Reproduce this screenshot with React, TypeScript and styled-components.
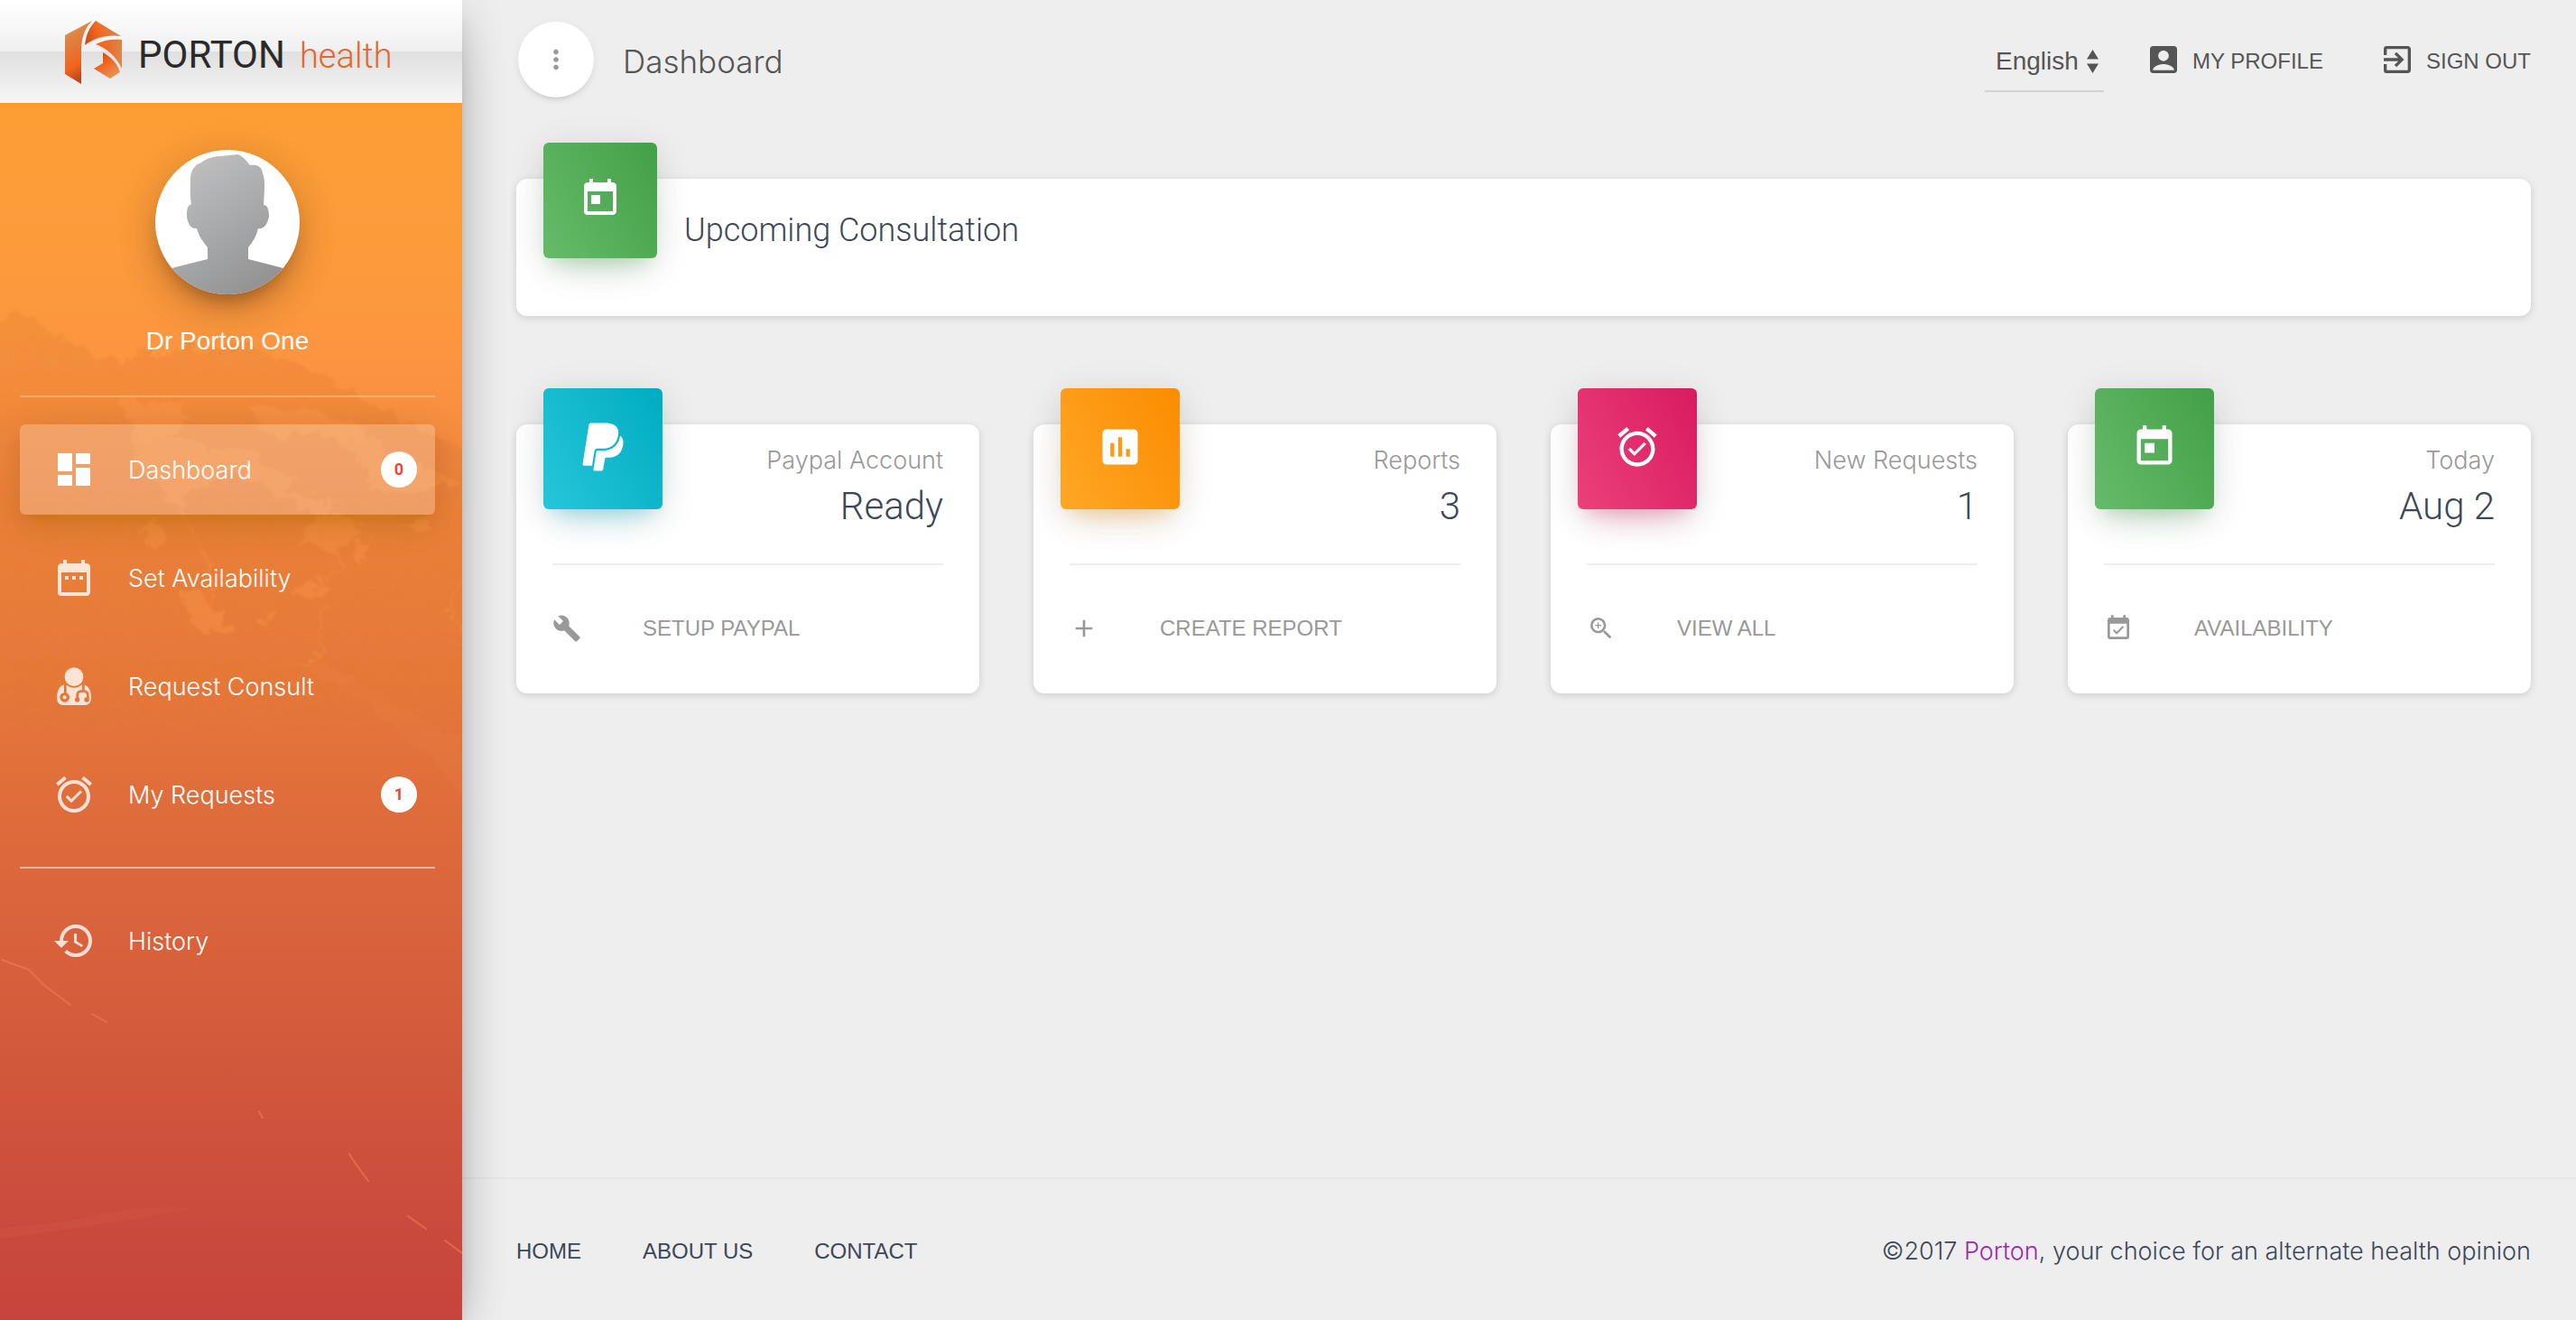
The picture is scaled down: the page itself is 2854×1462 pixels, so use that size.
import React from "react";
import styled, { createGlobalStyle, css } from "styled-components";
import {
  MdAccountBox,
  MdAdd,
  MdAlarmOn,
  MdAssessment,
  MdBuild,
  MdDashboard,
  MdDateRange,
  MdEventAvailable,
  MdExitToApp,
  MdHistory,
  MdMoreVert,
  MdToday,
  MdZoomIn,
} from "react-icons/md";
import { FaPaypal } from "react-icons/fa";

const sans = `"Liberation Sans", Arial, sans-serif`;
const light = `Inter, "Liberation Sans", sans-serif`;
const display = `Roboto, "Liberation Sans", sans-serif`;

const GlobalStyle = createGlobalStyle`
  *, *::before, *::after { box-sizing: border-box; }
  body {
    margin: 0;
    background: #eeeeee;
    color: #3c4858;
    font-family: ${sans};
    font-size: 24px;
    -webkit-font-smoothing: antialiased;
  }
  a { color: inherit; text-decoration: none; }
  h1, h2, p, ul { margin: 0; padding: 0; }
  ul { list-style: none; }
`;

const lightText = css`
  font-family: ${light};
  font-weight: 300;
  font-size: 27px;
`;

const Shell = styled.div`
  display: flex;
  min-height: 100vh;
`;

/* ---------- sidebar ---------- */

const Sidebar = styled.aside`
  flex: 0 0 512px;
  position: relative;
  z-index: 1;
  display: flex;
  flex-direction: column;
  box-shadow: 0 20px 60px -24px rgba(0, 0, 0, 0.42), 0 8px 50px 0 rgba(0, 0, 0, 0.12),
    0 16px 20px -10px rgba(0, 0, 0, 0.2);
`;

const Brand = styled.a`
  display: flex;
  align-items: center;
  gap: 18px;
  height: 114px;
  padding: 4px 0 0 72px;
  background: linear-gradient(#ffffff 0%, #f0f0f0 50%, #e0e0e0 50%, #f6f6f6 100%);
`;

const BrandMark = styled.svg`
  width: 63px;
  height: 70px;
  margin-bottom: 2px;
`;

const BrandName = styled.span`
  display: flex;
  align-items: baseline;
  gap: 16px;
  padding-top: 4px;
  font-family: ${display};
  font-size: 42px;
  line-height: 56px;
  color: #2b2a2a;
`;

const BrandSuffix = styled.span`
  font-weight: 300;
  font-size: 38px;
  color: #e4672b;
`;

const SidebarBody = styled.div`
  position: relative;
  flex: 1;
  padding: 52px 30px 0 22px;
  background: linear-gradient(
    #fc9e34 0%,
    #fd9b3b 12%,
    #fb9441 22%,
    #ee843c 34%,
    #e5783b 48%,
    #df6c3b 58%,
    #d8613c 70%,
    #d0553c 82%,
    #ca493d 93%,
    #c7443c 100%
  );
`;

const Scenery = styled.svg`
  position: absolute;
  inset: 0;
  width: 100%;
  height: 100%;
`;

const Profile = styled.div`
  position: relative;
  display: flex;
  flex-direction: column;
  align-items: center;
  gap: 32px;
  color: #ffffff;
`;

const Avatar = styled.svg`
  width: 160px;
  height: 160px;
  border-radius: 50%;
  background: #ffffff;
  box-shadow: 0 20px 60px -24px rgba(0, 0, 0, 0.42), 0 8px 50px 0 rgba(0, 0, 0, 0.12),
    0 16px 20px -10px rgba(0, 0, 0, 0.2);
`;

const ProfileName = styled.p`
  font-size: 28px;
  line-height: 40px;
`;

const Separator = styled.hr<{ $strong?: boolean }>`
  position: relative;
  height: 2px;
  margin: ${(p) => (p.$strong ? "30px 0" : "40px 0 30px")};
  border: 0;
  background: rgba(255, 255, 255, ${(p) => (p.$strong ? 0.5 : 0.3)});
`;

const NavList = styled.ul`
  position: relative;
  display: flex;
  flex-direction: column;
  gap: 20px;
`;

const NavLink = styled.a<{ $active?: boolean }>`
  display: flex;
  align-items: center;
  gap: 36px;
  height: 100px;
  padding: 0 20px 0 36px;
  border-radius: 6px;
  color: #ffffff;
  ${lightText}

  svg {
    width: 48px;
    height: 48px;
    opacity: ${(p) => (p.$active ? 1 : 0.8)};
  }

  ${(p) =>
    p.$active &&
    css`
      background: rgba(255, 255, 255, 0.23);
      box-shadow: 0 24px 40px -20px rgba(255, 152, 0, 0.28), 0 8px 40px 0 rgba(0, 0, 0, 0.12),
        0 14px 16px -10px rgba(190, 110, 0, 0.5);
    `}
`;

const Badge = styled.span`
  display: flex;
  align-items: center;
  justify-content: center;
  width: 40px;
  height: 40px;
  margin-left: auto;
  border-radius: 50%;
  background: #ffffff;
  color: #f44336;
  font: 700 18px/40px ${display};
`;

/* ---------- main ---------- */

const Main = styled.div`
  flex: 1;
  min-width: 0;
  display: flex;
  flex-direction: column;
`;

const Header = styled.header`
  display: flex;
  align-items: center;
  gap: 32px;
  padding: 24px 50px 0 62px;
  color: #555555;
`;

const MenuButton = styled.button`
  display: flex;
  align-items: center;
  justify-content: center;
  width: 84px;
  height: 84px;
  padding: 0;
  border: 0;
  border-radius: 50%;
  background: #ffffff;
  color: #999999;
  box-shadow: 0 4px 4px 0 rgba(153, 153, 153, 0.14), 0 6px 2px -4px rgba(153, 153, 153, 0.2),
    0 2px 10px 0 rgba(153, 153, 153, 0.12);

  svg {
    width: 34px;
    height: 34px;
  }
`;

const PageTitle = styled.h1`
  padding-top: 4px;
  font-family: ${light};
  font-weight: 300;
  font-size: 35px;
  line-height: 44px;
`;

const HeaderTools = styled.nav`
  display: flex;
  align-items: center;
  gap: 62px;
  margin-left: auto;
`;

const LanguageField = styled.label`
  position: relative;
  display: block;
  margin-right: -16px;

  svg {
    position: absolute;
    right: 6px;
    top: 25px;
    width: 13px;
    height: 26px;
    pointer-events: none;
  }
`;

const LanguageSelect = styled.select`
  appearance: none;
  display: block;
  width: 132px;
  height: 72px;
  padding: 6px 28px 0 12px;
  border: 0;
  border-bottom: 2px solid #d2d2d2;
  border-radius: 0;
  background: transparent;
  color: #555555;
  font: 400 28px/40px ${sans};
`;

const ToolLink = styled.a`
  display: flex;
  align-items: center;
  gap: 12px;
  line-height: 28px;

  svg {
    width: 40px;
    height: 40px;
  }

  span {
    padding-top: 4px;
  }
`;

const Content = styled.main`
  flex: 1;
  display: flex;
  flex-direction: column;
  gap: 120px;
  padding: 90px 50px 60px 60px;
`;

const cardSurface = css`
  border-radius: 12px;
  background: #ffffff;
  box-shadow: 0 2px 8px 0 rgba(0, 0, 0, 0.14);
`;

const tones = {
  green: ["#66bb6a", "#43a047", "76, 175, 80"],
  blue: ["#26c6da", "#00acc1", "0, 188, 212"],
  orange: ["#ffa726", "#fb8c00", "255, 152, 0"],
  rose: ["#ec407a", "#d81b60", "233, 30, 99"],
};
type Tone = keyof typeof tones;

const Tile = styled.div<{ $tone: Tone; $small?: boolean; $iconSize: number }>`
  display: flex;
  align-items: center;
  justify-content: center;
  flex: none;
  width: ${(p) => (p.$small ? 126 : 132)}px;
  height: ${(p) => (p.$small ? 128 : 134)}px;
  margin-top: -40px;
  padding-bottom: 4px;
  border-radius: 6px;
  color: #ffffff;
  background: linear-gradient(60deg, ${(p) => tones[p.$tone][0]}, ${(p) => tones[p.$tone][1]});
  box-shadow: 0 24px 40px -20px rgba(${(p) => tones[p.$tone][2]}, 0.28),
    0 8px 40px 0 rgba(0, 0, 0, 0.12), 0 14px 16px -10px rgba(${(p) => tones[p.$tone][2]}, 0.2);

  svg {
    width: ${(p) => p.$iconSize}px;
    height: ${(p) => p.$iconSize}px;
  }
`;

const Banner = styled.section`
  ${cardSurface}
  display: flex;
  gap: 30px;
  height: 152px;
  padding: 0 30px;
`;

const BannerTitle = styled.h2`
  padding-top: 36px;
  font-family: ${display};
  font-weight: 300;
  font-size: 36px;
  line-height: 42px;
`;

const CardGrid = styled.div`
  display: grid;
  grid-template-columns: repeat(4, minmax(0, 1fr));
  gap: 60px;
`;

const Card = styled.section`
  ${cardSurface}
`;

const CardTop = styled.div`
  display: flex;
  justify-content: space-between;
  padding: 0 40px 32px 30px;
`;

const Figures = styled.div`
  padding-top: 20px;
  text-align: right;
`;

const FigureLabel = styled.p`
  ${lightText}
  line-height: 40px;
  color: #999999;
`;

const FigureValue = styled.p`
  font-family: ${display};
  font-weight: 300;
  font-size: 42px;
  line-height: 62px;
`;

const CardAction = styled.a`
  display: flex;
  align-items: center;
  gap: 68px;
  margin: 0 40px;
  padding: 54px 0 56px;
  border-top: 2px solid #eeeeee;
  color: #999999;
  line-height: 32px;

  svg {
    width: 32px;
    height: 32px;
  }
`;

const Footer = styled.footer`
  display: flex;
  justify-content: space-between;
  padding: 60px 50px 56px 60px;
  border-top: 2px solid #e7e7e7;
  line-height: 40px;
`;

const FooterLinks = styled.ul`
  display: flex;
  gap: 68px;
`;

const Copyright = styled.p`
  ${lightText}

  a {
    color: #9c27b0;
  }
`;

/* ---------- drawings ---------- */

const LogoMark = () => (
  <BrandMark viewBox="0 0 63 70" aria-hidden="true">
    <defs>
      <linearGradient id="lg-a" x1="0" y1="0" x2="0.3" y2="1">
        <stop offset="0" stopColor="#dfa878" />
        <stop offset="0.3" stopColor="#dd8443" />
        <stop offset="0.75" stopColor="#f1641f" />
        <stop offset="1" stopColor="#b8481a" />
      </linearGradient>
      <linearGradient id="lg-b" x1="0" y1="0.6" x2="1" y2="0.4">
        <stop offset="0" stopColor="#c94f17" />
        <stop offset="0.35" stopColor="#f2661f" />
        <stop offset="1" stopColor="#d98a50" />
      </linearGradient>
      <linearGradient id="lg-c" x1="0" y1="0" x2="1" y2="0.1">
        <stop offset="0" stopColor="#f4651c" />
        <stop offset="0.5" stopColor="#ee6a27" />
        <stop offset="1" stopColor="#d9874a" />
      </linearGradient>
      <linearGradient id="lg-d" x1="0.2" y1="0" x2="0.9" y2="1">
        <stop offset="0" stopColor="#c94a12" />
        <stop offset="0.4" stopColor="#f1661f" />
        <stop offset="1" stopColor="#dfa067" />
      </linearGradient>
    </defs>
    <path d="M0 16 30 0C22 8 18 19 18 32V70L0 59Z" fill="url(#lg-a)" />
    <path d="M34 0 62 17C48 15 34 18 22 27 23 16 27 7 34 0Z" fill="url(#lg-b)" />
    <path d="M34 26C43 21 53 20 63 21V53C57 40 47 31 34 26Z" fill="url(#lg-c)" />
    <path d="M42 35C51 40 58 47 61 57L50 64 32 53 42 47Z" fill="url(#lg-d)" />
  </BrandMark>
);

const Silhouette = () => (
  <Avatar viewBox="0 0 160 160" role="img" aria-label="Dr Porton One">
    <defs>
      <linearGradient id="skin" x1="0.1" y1="0" x2="0.8" y2="1">
        <stop offset="0" stopColor="#c4c4c4" />
        <stop offset="0.5" stopColor="#a9aaac" />
        <stop offset="1" stopColor="#8f8f8f" />
      </linearGradient>
    </defs>
    <path
      fill="url(#skin)"
      d="M40 60C38 50 39 40 39 30 40 21 45 16 51 14 58 9 65 7 72 7L92 5C98 8 101 12 105 17 111 16 118 17 119 26 122 32 121 45 120 61 125 61 126 68 126 74 124 83 120 88 114 87 112 96 108 102 103 108V121L142 131 160 160H0L18 131 58 121V108C52 101 48 95 46 87 39 88 36 81 35 74 35 67 35 62 40 60Z"
    />
  </Avatar>
);

const DoctorIcon = () => (
  <svg viewBox="174 20 144 144" fill="currentColor" aria-hidden="true">
    <mask id="stethoscope">
      <rect x="174" y="20" width="144" height="144" fill="#fff" />
      <circle cx="246" cy="61" r="36" fill="#000" />
      <g stroke="#000" fill="none" strokeWidth="8" strokeLinecap="round">
        <path d="M217 84v32" />
        <path d="M277 84v24M257 136v-14q0-14 16-14h4q15 0 15 16v12" />
      </g>
      <circle cx="215" cy="129" r="16" fill="#000" />
      <circle cx="215" cy="129" r="6" fill="#fff" />
      <circle cx="257" cy="137" r="8" fill="#000" />
      <circle cx="288" cy="137" r="8" fill="#000" />
    </mask>
    <circle cx="246" cy="61" r="31" />
    <path
      mask="url(#stethoscope)"
      d="M214 87h64c18 5 25 22 25 45 0 15-9 23-22 23h-70c-13 0-22-8-22-23 0-23 7-40 25-45z"
    />
  </svg>
);

const SortArrows = () => (
  <svg viewBox="0 0 13 26" fill="currentColor" aria-hidden="true">
    <path d="M6.500 0 13 10.500H0zM6.500 26 0 15.500h13z" />
  </svg>
);

const Mountains = () => (
  <Scenery viewBox="0 114 512 1348" preserveAspectRatio="xMidYMin slice" aria-hidden="true">
    <defs>
      <linearGradient id="fade" x1="0" y1="0" x2="0" y2="1">
        <stop offset="0" stopColor="#d8722c" stopOpacity="0.2" />
        <stop offset="0.4" stopColor="#d8722c" stopOpacity="0.26" />
        <stop offset="1" stopColor="#d8722c" stopOpacity="0" />
      </linearGradient>
      <filter id="rough">
        <feTurbulence type="fractalNoise" baseFrequency="0.06" numOctaves="4" seed="4" />
        <feDisplacementMap in="SourceGraphic" scale="26" xChannelSelector="R" yChannelSelector="G" />
        <feGaussianBlur stdDeviation="0.8" />
      </filter>
    </defs>
    <g filter="url(#rough)">
      <path
        fill="url(#fade)"
        d="M-20 372 14 345 50 362 90 386 130 402 160 392 210 386 270 380 330 402 370 420 410 446 460 474 540 508V820H-20Z"
      />
      <g fill="#ff9a50" fillOpacity="0.34">
        <path d="M130 440 200 446 214 466 186 480 230 500 275 490 300 520 330 530 318 545 360 552 380 560 350 572 330 565 300 540 250 520 232 540 200 545 206 570 180 545 150 510 146 470Z" />
        <path d="M270 448 330 452 390 470 430 500 480 520 512 535 470 545 420 540 392 500 350 476 310 490 290 470Z" />
        <path d="M158 580 172 574 184 598 176 608 158 604Z" />
        <path d="M350 570 385 570 402 588 380 612 352 604 330 608 342 590Z" />
        <path d="M392 602 408 598 402 618 398 628Z" />
        <path d="M450 582 480 574 470 592Z" />
        <path d="M194 658 210 654 240 680 262 700 250 704 220 694Z" />
        <path d="M322 652 350 648 368 654 352 660Z" />
        <path d="M292 680 302 682 296 690 288 686Z" />
      </g>
      <g stroke="#ff9a50" strokeOpacity="0.35" strokeWidth="2" fill="none">
        <path d="M200 570 228 616 240 674" />
        <path d="M370 610 382 626 350 648" />
        <path d="M360 672 354 700 358 716 342 742 326 736" />
        <path d="M512 650 496 670 500 684 516 700" />
      </g>
      <path
        d="M280 734 350 745 420 790 470 830 512 880V820L440 780 370 740Z"
        fill="#ff9a50"
        fillOpacity="0.07"
      />
    </g>
    <g stroke="#f57c59" strokeWidth="2" fill="none" strokeLinecap="round" strokeLinejoin="round" opacity="0.6">
      <path d="M2 1063 32 1074 50 1092 66 1104 78 1113" />
      <path d="M102 1123 118 1132" />
      <path d="M287 1231 291 1238M387 1278 392 1286 408 1308" />
      <path d="M452 1347 472 1361M493 1374 512 1388" />
    </g>
    <path
      d="M0 1360 60 1355 150 1338 215 1338 150 1350 70 1362 0 1372Z"
      fill="#e06a50"
      fillOpacity="0.16"
    />
  </Scenery>
);

/* ---------- page ---------- */

type NavItem = { label: string; icon: React.ReactNode; count?: number; active?: boolean };

const navItems: NavItem[] = [
  { label: "Dashboard", icon: <MdDashboard />, count: 0, active: true },
  { label: "Set Availability", icon: <MdDateRange /> },
  { label: "Request Consult", icon: <DoctorIcon /> },
  { label: "My Requests", icon: <MdAlarmOn />, count: 1 },
];

const cards: {
  tone: Tone;
  icon: React.ReactNode;
  iconSize: number;
  label: string;
  value: string;
  actionIcon: React.ReactNode;
  action: string;
}[] = [
  { tone: "blue", icon: <FaPaypal />, iconSize: 60, label: "Paypal Account", value: "Ready", actionIcon: <MdBuild />, action: "SETUP PAYPAL" },
  { tone: "orange", icon: <MdAssessment />, iconSize: 52, label: "Reports", value: "3", actionIcon: <MdAdd />, action: "CREATE REPORT" },
  { tone: "rose", icon: <MdAlarmOn />, iconSize: 52, label: "New Requests", value: "1", actionIcon: <MdZoomIn />, action: "VIEW ALL" },
  { tone: "green", icon: <MdToday />, iconSize: 52, label: "Today", value: "Aug 2", actionIcon: <MdEventAvailable />, action: "AVAILABILITY" },
];

export default function App() {
  return (
    <>
      <GlobalStyle />
      <Shell>
        <Sidebar>
          <Brand href="#">
            <LogoMark />
            <BrandName>
              PORTON <BrandSuffix>health</BrandSuffix>
            </BrandName>
          </Brand>
          <SidebarBody>
            <Mountains />
            <Profile>
              <Silhouette />
              <ProfileName>Dr Porton One</ProfileName>
            </Profile>
            <Separator />
            <NavList>
              {navItems.map((item) => (
                <li key={item.label}>
                  <NavLink href="#" $active={item.active}>
                    {item.icon}
                    {item.label}
                    {item.count !== undefined && <Badge>{item.count}</Badge>}
                  </NavLink>
                </li>
              ))}
            </NavList>
            <Separator $strong />
            <NavList>
              <li>
                <NavLink href="#">
                  <MdHistory />
                  History
                </NavLink>
              </li>
            </NavList>
          </SidebarBody>
        </Sidebar>

        <Main>
          <Header>
            <MenuButton type="button" aria-label="Toggle sidebar">
              <MdMoreVert />
            </MenuButton>
            <PageTitle>Dashboard</PageTitle>
            <HeaderTools>
              <LanguageField>
                <LanguageSelect aria-label="Language" defaultValue="en">
                  <option value="en">English</option>
                </LanguageSelect>
                <SortArrows />
              </LanguageField>
              <ToolLink href="#">
                <MdAccountBox />
                <span>MY PROFILE</span>
              </ToolLink>
              <ToolLink href="#">
                <MdExitToApp />
                <span>SIGN OUT</span>
              </ToolLink>
            </HeaderTools>
          </Header>

          <Content>
            <Banner>
              <Tile $tone="green" $small $iconSize={48}>
                <MdToday />
              </Tile>
              <BannerTitle>Upcoming Consultation</BannerTitle>
            </Banner>
            <CardGrid>
              {cards.map((card) => (
                <Card key={card.label}>
                  <CardTop>
                    <Tile $tone={card.tone} $iconSize={card.iconSize}>
                      {card.icon}
                    </Tile>
                    <Figures>
                      <FigureLabel>{card.label}</FigureLabel>
                      <FigureValue>{card.value}</FigureValue>
                    </Figures>
                  </CardTop>
                  <CardAction href="#">
                    {card.actionIcon}
                    {card.action}
                  </CardAction>
                </Card>
              ))}
            </CardGrid>
          </Content>

          <Footer>
            <FooterLinks>
              <li><a href="#">HOME</a></li>
              <li><a href="#">ABOUT US</a></li>
              <li><a href="#">CONTACT</a></li>
            </FooterLinks>
            <Copyright>
              ©2017 <a href="#">Porton</a>, your choice for an alternate health opinion
            </Copyright>
          </Footer>
        </Main>
      </Shell>
    </>
  );
}
